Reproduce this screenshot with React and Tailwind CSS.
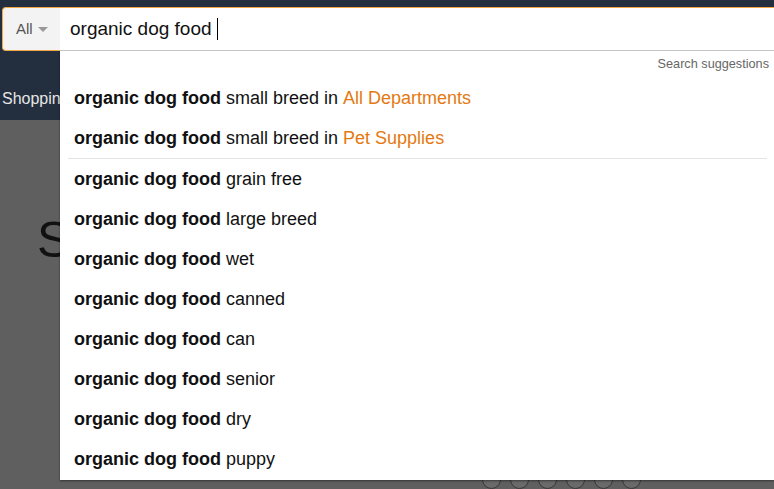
const suggestions = [
  'grain free',
  'large breed',
  'wet',
  'canned',
  'can',
  'senior',
  'dry',
  'puppy',
];

function Row({ rest, dept }) {
  return (
    <div className="h-10 flex items-center pl-[14px] pt-[1px] text-[18px] text-[#111] whitespace-nowrap">
      <span className="font-bold">organic dog food</span>
      <span>&nbsp;{rest}</span>
      {dept && <span>&nbsp;in&nbsp;</span>}
      {dept && <span className="text-[#e47911]">{dept}</span>}
    </div>
  );
}

export default function App() {
  return (
    <div className="relative w-[774px] h-[489px] overflow-hidden bg-[#5f5f5f] font-['Liberation_Sans',Arial,sans-serif]">
      {/* nav */}
      <div className="h-[120px] bg-[#232f3e] pt-[7px]">
        <div className="flex h-[44px] pl-[2px]">
          <div className="w-[58px] flex items-center pl-[13px] gap-[5px] bg-[#f3f3f3] border border-r-0 border-[#f3a847] rounded-l-[4px] text-[#555] text-[15px]">
            <span>All</span>
            <svg width="10" height="6" viewBox="0 0 10 6" className="mt-[1px]">
              <path d="M0 0 L10 0 L5 5 Z" fill="#999" />
            </svg>
          </div>
          <div className="flex-1 flex items-center bg-white border-t border-[#f3a847] border-b border-b-[#cccccc] pl-[10px] text-[19px] text-[#111]">
            <span className="whitespace-pre">organic dog food </span>
            <span className="w-px h-[22px] bg-black"></span>
          </div>
        </div>
        <div className="mt-[36px] pl-[2px] text-[16px] text-[#e6e6e6]">Shopping</div>
      </div>

      {/* page behind overlay */}
      <div className="pl-[37px] pt-[95px] text-[50px] leading-none text-[#111]">S</div>
      <div className="absolute left-[482px] top-[470px] flex gap-[9px]">
        {[0, 1, 2, 3, 4, 5].map((i) => (
          <div key={i} className="w-[19px] h-[19px] rounded-full bg-[#6a6a6a] border border-[#3a3a3a]"></div>
        ))}
      </div>

      {/* dropdown */}
      <div className="absolute left-[60px] top-[51px] w-[714px] h-[429px] bg-white shadow-[0_1px_2px_rgba(0,0,0,0.45)]">
        <div className="h-[27px] flex items-center justify-end pr-[5px] text-[12.7px] text-[#666]">
          Search suggestions
        </div>
        <Row rest="small breed" dept="All Departments" />
        <Row rest="small breed" dept="Pet Supplies" />
        <div className="h-px bg-[#e3e3e3] ml-[8px] mr-[7px]"></div>
        {suggestions.map((s) => (
          <Row key={s} rest={s} />
        ))}
      </div>
    </div>
  );
}
